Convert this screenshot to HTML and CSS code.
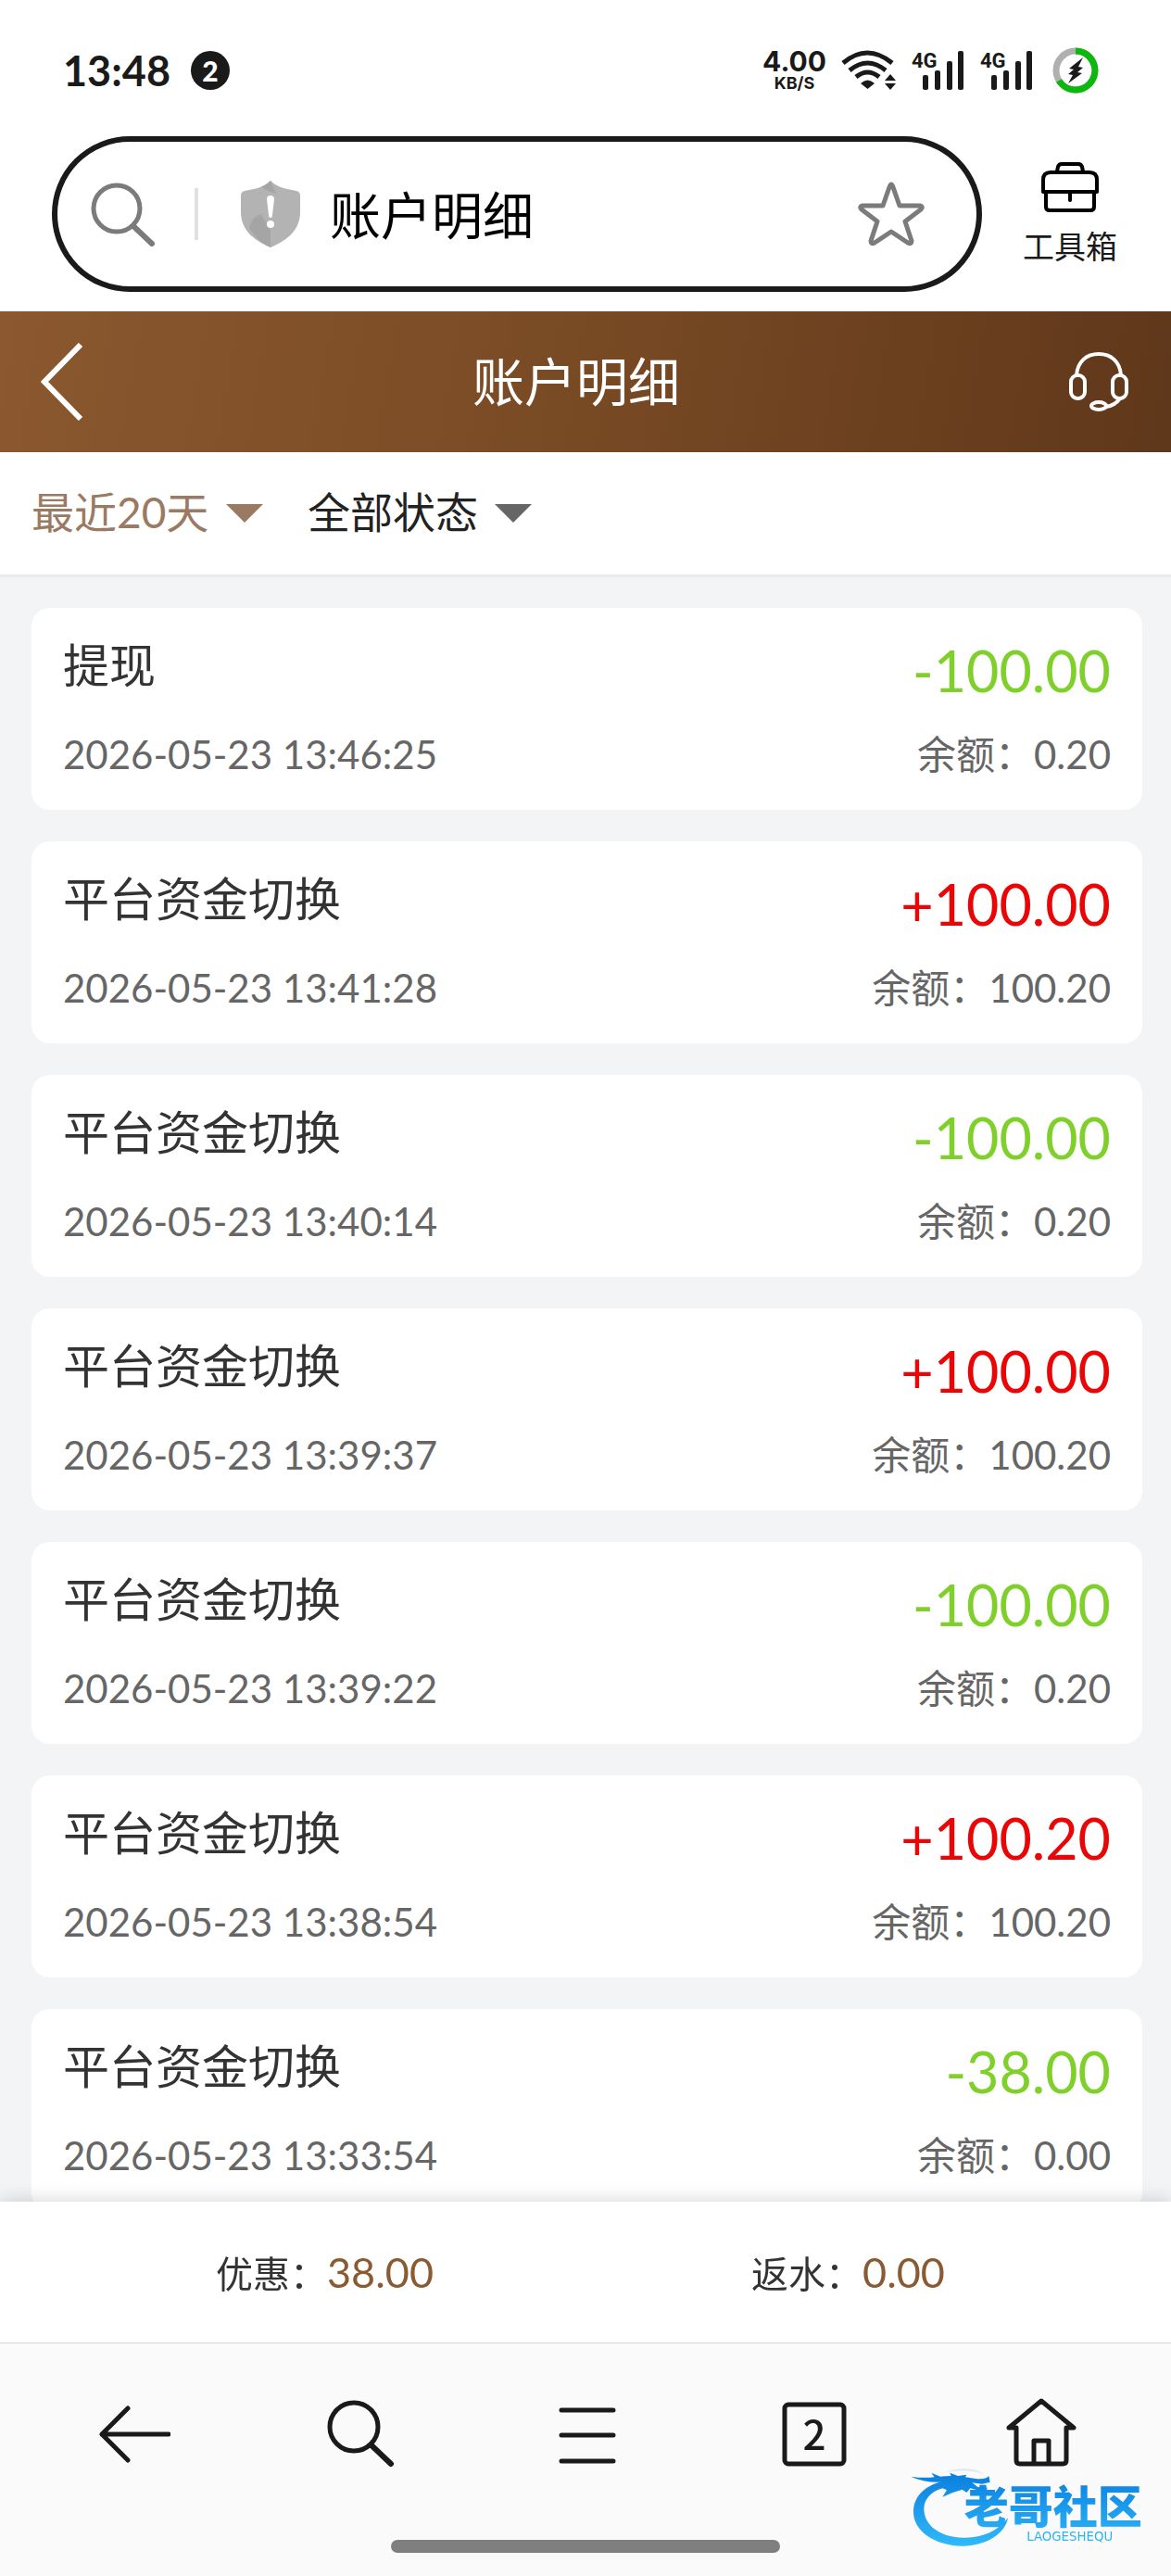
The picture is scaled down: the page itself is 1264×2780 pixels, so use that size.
FILE: index.html
```html
<!DOCTYPE html>
<html lang="zh-CN">
<head>
  <meta charset="UTF-8">
  <meta name="viewport" content="width=device-width, initial-scale=1">
  <title>账户明细</title>
  <link rel="stylesheet" href="styles.css">
</head>
<body>
  <div class="page">

    <!-- Status bar -->
    <div class="status-bar">
      <span class="clock">13:48</span>
      <span class="notice-count">2</span>
      <div class="status-right">
        <div class="net-speed">
          <span class="speed-value">4.00</span>
          <span class="speed-unit">KB/S</span>
        </div>
        <svg class="wifi" width="60" height="44" viewBox="0 0 60 44" fill="none" stroke="#1a1a1a" stroke-width="5">
          <path d="M2 14Q28 -8 55 14"/>
          <path d="M9 22Q28.500 6 48 22"/>
          <path d="M16 29Q28.500 19 41 29"/>
          <path d="M21 36Q28.500 29 36 36L28.500 42z" fill="#1a1a1a" stroke="none"/>
          <path d="M47 33L53 26L59 33zM47 36H59L53 43z" fill="#1a1a1a" stroke="none"/>
        </svg>
        <svg class="signal" width="58" height="44" viewBox="0 0 58 44">
          <text x="0" y="19" class="signal-text">4G</text>
          <rect x="12" y="27" width="6" height="16" rx="2"/>
          <rect x="25" y="22" width="6" height="21" rx="2"/>
          <rect x="38" y="12" width="6" height="31" rx="2"/>
          <rect x="50" y="1" width="6" height="42" rx="2"/>
        </svg>
        <svg class="signal" width="58" height="44" viewBox="0 0 58 44">
          <text x="0" y="19" class="signal-text">4G</text>
          <rect x="12" y="27" width="6" height="16" rx="2"/>
          <rect x="25" y="22" width="6" height="21" rx="2"/>
          <rect x="38" y="12" width="6" height="31" rx="2"/>
          <rect x="50" y="1" width="6" height="42" rx="2"/>
        </svg>
        <svg class="battery" width="50" height="50" viewBox="0 0 50 50" fill="none" stroke-width="7">
          <circle cx="25" cy="25" r="21" stroke="#b0b0b0"/>
          <path d="M25 4A21 21 0 1 1 7 36" stroke="#0db80d"/>
          <path d="M33 11L18 23L23 24L17 29L22 30L17 39L32 28L27 27L33 22L28 21z" fill="#1a1a1a"/>
        </svg>
      </div>
    </div>

    <!-- Browser address bar -->
    <div class="browser-bar">
      <div class="address">
        <svg width="70" height="70" viewBox="0 0 70 70" fill="none" stroke="#7b7b7b" stroke-width="5">
          <circle cx="28" cy="29" r="25"/>
          <path d="M46 48L66 67" stroke-width="6" stroke-linecap="round"/>
        </svg>
        <span class="divider"></span>
        <svg class="shield" width="64" height="72" viewBox="0 0 64 72">
          <path d="M32 0C40 8 50 9 60 11Q64 12 64 16V34C64 55 47 66 32 72C17 66 0 55 0 34V16Q0 12 4 11C14 9 24 8 32 0z" fill="#b3b3b3"/>
          <path d="M9 51Q12 38 22 36L32 54L32 72Q18 66 9 51zM32 0L38 14Q30 12 22 7Q28 4 32 0z" fill="#a5a5a5"/>
          <path d="M28 20Q28 16 32 16Q36 16 36 20L34 37Q34 40 32 40Q30 40 30 37z" fill="#fff"/>
          <circle cx="32" cy="47" r="4" fill="#fff"/>
        </svg>
        <input class="address-input" type="text" value="账户明细" aria-label="地址栏">
        <button class="icon-btn" type="button" aria-label="收藏">
          <svg width="72" height="72" viewBox="0 0 72 72" fill="none" stroke="#7b7b7b" stroke-width="5" stroke-linejoin="round">
            <path d="M36 4Q37 4 38 7L45 27H67Q71 28 68 31L51 44L58 65Q58 69 54 67L36 55L18 67Q14 69 14 65L21 44L4 31Q1 28 5 27H27L34 7Q35 4 36 4z"/>
          </svg>
        </button>
      </div>
      <button class="toolbox" type="button">
        <svg width="64" height="56" viewBox="0 0 64 56" fill="none" stroke="#000" stroke-width="4" stroke-linejoin="round" stroke-linecap="round">
          <path d="M18 11L19 6Q20 3 23 3H41Q44 3 45 6L46 11"/>
          <path d="M3 33V20Q3 12 11 12H53Q61 12 61 20V33z"/>
          <path d="M6 34V49Q6 53 10 53H54Q58 53 58 49V34M32 34V42"/>
        </svg>
        <span>工具箱</span>
      </button>
    </div>

    <!-- Page header -->
    <header class="header">
      <button class="icon-btn" type="button" aria-label="返回">
        <svg width="46" height="84" viewBox="0 0 46 84" fill="none" stroke="#fff" stroke-width="6">
          <path d="M43 2L4 42L43 82"/>
        </svg>
      </button>
      <h1>账户明细</h1>
      <button class="icon-btn" type="button" aria-label="客服">
        <svg width="64" height="66" viewBox="0 0 64 66" fill="none" stroke="#fff" stroke-width="4">
          <path d="M8 26C9 11 19 3 32 3S55 11 56 26"/>
          <rect x="2" y="26" width="15" height="25" rx="7"/>
          <rect x="47" y="26" width="15" height="25" rx="7"/>
          <ellipse cx="32" cy="59" rx="8" ry="4"/>
          <path d="M40 60Q49 59 55 51"/>
        </svg>
      </button>
    </header>

    <!-- Filters -->
    <div class="filters">
      <div class="filter active">
        <select aria-label="时间">
          <option>最近20天</option>
          <option>最近7天</option>
        </select>
        <span class="arrow"></span>
      </div>
      <div class="filter">
        <select aria-label="状态">
          <option>全部状态</option>
          <option>提现</option>
        </select>
        <span class="arrow"></span>
      </div>
    </div>

    <!-- Records -->
    <ul class="records">
      <li class="card">
        <div class="info">
          <span class="title">提现</span>
          <time class="date">2026-05-23 13:46:25</time>
        </div>
        <div class="money">
          <span class="amount out">-100.00</span>
          <span class="balance">余额：0.20</span>
        </div>
      </li>
      <li class="card">
        <div class="info">
          <span class="title">平台资金切换</span>
          <time class="date">2026-05-23 13:41:28</time>
        </div>
        <div class="money">
          <span class="amount in">+100.00</span>
          <span class="balance">余额：100.20</span>
        </div>
      </li>
      <li class="card">
        <div class="info">
          <span class="title">平台资金切换</span>
          <time class="date">2026-05-23 13:40:14</time>
        </div>
        <div class="money">
          <span class="amount out">-100.00</span>
          <span class="balance">余额：0.20</span>
        </div>
      </li>
      <li class="card">
        <div class="info">
          <span class="title">平台资金切换</span>
          <time class="date">2026-05-23 13:39:37</time>
        </div>
        <div class="money">
          <span class="amount in">+100.00</span>
          <span class="balance">余额：100.20</span>
        </div>
      </li>
      <li class="card">
        <div class="info">
          <span class="title">平台资金切换</span>
          <time class="date">2026-05-23 13:39:22</time>
        </div>
        <div class="money">
          <span class="amount out">-100.00</span>
          <span class="balance">余额：0.20</span>
        </div>
      </li>
      <li class="card">
        <div class="info">
          <span class="title">平台资金切换</span>
          <time class="date">2026-05-23 13:38:54</time>
        </div>
        <div class="money">
          <span class="amount in">+100.20</span>
          <span class="balance">余额：100.20</span>
        </div>
      </li>
      <li class="card">
        <div class="info">
          <span class="title">平台资金切换</span>
          <time class="date">2026-05-23 13:33:54</time>
        </div>
        <div class="money">
          <span class="amount out">-38.00</span>
          <span class="balance">余额：0.00</span>
        </div>
      </li>
    </ul>

    <!-- Totals -->
    <div class="summary">
      <div class="summary-item">优惠：<span class="summary-value">38.00</span></div>
      <div class="summary-item">返水：<span class="summary-value">0.00</span></div>
    </div>

    <!-- Browser toolbar -->
    <nav class="toolbar">
      <div class="toolbar-buttons">
        <button class="icon-btn" type="button" aria-label="后退">
          <svg width="80" height="80" viewBox="0 0 80 80">
            <path d="M34 13L6 41L34 69M6 41H78"/>
          </svg>
        </button>
        <button class="icon-btn" type="button" aria-label="搜索">
          <svg width="80" height="80" viewBox="0 0 80 80">
            <circle cx="33" cy="33" r="26"/>
            <path d="M52 53L73 73" stroke-width="6"/>
          </svg>
        </button>
        <button class="icon-btn" type="button" aria-label="菜单">
          <svg width="80" height="80" viewBox="0 0 80 80">
            <path d="M12 15H68M12 42H68M12 70H68"/>
          </svg>
        </button>
        <button class="icon-btn" type="button" aria-label="标签页">
          <svg width="80" height="80" viewBox="0 0 80 80">
            <rect x="8" y="9" width="64" height="64" rx="4"/>
            <text x="40" y="58" class="tab-count">2</text>
          </svg>
        </button>
        <button class="icon-btn" type="button" aria-label="主页">
          <svg width="80" height="80" viewBox="0 0 80 80">
            <path d="M13 34H5L40 5L75 34H67V69Q67 73 63 73H17Q13 73 13 69zM32 73V48H48V73"/>
          </svg>
        </button>
      </div>
      <div class="home-handle"></div>

      <svg class="watermark" width="304" height="140" viewBox="0 0 912 420">
        <defs>
          <linearGradient id="blue" gradientUnits="userSpaceOnUse" x1="0" y1="90" x2="0" y2="320">
            <stop offset="0" stop-color="#0a7fe0"/>
            <stop offset="1" stop-color="#2fb9f8"/>
          </linearGradient>
        </defs>
        <g fill="url(#blue)">
          <path d="M210 108C120 115 78 160 78 212C78 275 150 323 238 323C310 323 375 285 384 232C350 275 305 296 245 296C175 296 114 265 112 205C111 165 145 132 220 128z"/>
          <path d="M70 98Q110 104 146 100L136 86L165 98L200 96L196 86L222 96L250 92L246 100L275 104Q310 110 322 96L326 116L300 122L268 118L286 132L318 134L310 148L285 142L262 136L250 150L236 140L205 150L172 164L186 142L160 130L170 116Q110 118 70 98z"/>
          <path d="M180 84Q260 58 310 92Q262 70 180 84z" opacity=".15"/>
          <text x="530" y="250" class="mark-name">老哥社区</text>
          <text x="584" y="305" class="mark-sub">LAOGESHEQU</text>
        </g>
      </svg>
    </nav>

  </div>
</body>
</html>
```
FILE: styles.css
```css
* {
  box-sizing: border-box;
}

body {
  margin: 0;
  font-family: Lato, "Noto Sans CJK SC", sans-serif;
  color: #333;
  background-color: #fff;
}

svg {
  display: block;
  flex-shrink: 0;
}

button {
  padding: 0;
  border: none;
  background: none;
  font-family: inherit;
  cursor: pointer;
}

.page {
  display: flex;
  flex-direction: column;
  height: 100vh;
}

/* Status bar */
.status-bar {
  display: flex;
  align-items: center;
  height: 147px;
  padding: 4px 78px 0 68px;
  color: #1a1a1a;
}

.clock {
  font-size: 45px;
  font-weight: bold;
}

.notice-count {
  width: 42px;
  height: 42px;
  margin-left: 22px;
  border-radius: 50%;
  background-color: #1a1a1a;
  color: #fff;
  font-size: 30px;
  font-weight: 900;
  line-height: 42px;
  text-align: center;
}

.status-right {
  display: flex;
  align-items: center;
  gap: 16px;
  margin-left: auto;
}

.net-speed {
  display: flex;
  flex-direction: column;
  align-items: center;
  font-family: Inter, sans-serif;
  font-weight: bold;
}

.speed-value {
  font-size: 30px;
  line-height: 28px;
}

.speed-unit {
  font-size: 18px;
  line-height: 20px;
}

.signal {
  fill: #1a1a1a;
}

.signal-text {
  font-family: Roboto, sans-serif;
  font-size: 22px;
  font-weight: bold;
}

.battery {
  margin-left: 4px;
}

/* Browser address bar */
.browser-bar {
  display: flex;
  align-items: center;
  gap: 44px;
  padding: 0 58px 21px 56px;
}

.address {
  display: flex;
  flex: 1;
  align-items: center;
  min-width: 0;
  height: 168px;
  padding: 0 56px 0 36px;
  border: 6px solid #1a1a1a;
  border-radius: 84px;
}

.divider {
  flex-shrink: 0;
  width: 4px;
  height: 56px;
  margin: 0 46px 0 42px;
  background-color: #e0e0e0;
}

.address-input {
  flex: 1;
  min-width: 0;
  margin-left: 32px;
  padding: 0 0 4px;
  border: none;
  outline: none;
  background: none;
  color: #000;
  font-family: inherit;
  font-size: 55px;
}

.toolbox {
  display: flex;
  flex-direction: column;
  flex-shrink: 0;
  align-items: center;
  gap: 10px;
  color: #1a1a1a;
  font-size: 34px;
  white-space: nowrap;
}

/* Page header */
.header {
  display: flex;
  align-items: center;
  justify-content: space-between;
  height: 152px;
  padding: 0 46px 0 44px;
  background-image: linear-gradient(100deg, #8b582f, #784a24 50%, #5f371a);
  color: #fff;
}

.header h1 {
  margin: 0;
  padding-bottom: 8px;
  font-size: 56px;
  font-weight: normal;
}

/* Filters */
.filters {
  display: flex;
  align-items: center;
  gap: 48px;
  height: 135px;
  padding: 0 34px;
  border-bottom: 3px solid #eaeaea;
}

.filter {
  display: flex;
  align-items: center;
  gap: 18px;
  color: #666;
}

.filter select {
  appearance: none;
  padding: 0 0 4px;
  border: none;
  background: none;
  color: #222;
  font-family: inherit;
  font-size: 46px;
}

.filter.active,
.filter.active select {
  color: #9b7a63;
}

.arrow {
  border: 20px solid transparent;
  border-top-color: currentColor;
  border-bottom: none;
}

/* Records */
.records {
  display: flex;
  flex: 1;
  flex-direction: column;
  gap: 34px;
  min-height: 0;
  margin: 0;
  padding: 33px 31px 0 34px;
  overflow-y: auto;
  scrollbar-width: none;
  background-color: #f3f4f6;
  list-style: none;
}

.card {
  display: flex;
  flex-shrink: 0;
  justify-content: space-between;
  padding: 32px 34px 30px;
  border-radius: 20px;
  background-color: #fff;
}

.info,
.money {
  display: flex;
  flex-direction: column;
  justify-content: space-between;
  height: 156px;
}

.money {
  align-items: flex-end;
}

.title {
  font-size: 50px;
  line-height: 60px;
}

.date,
.balance {
  color: #666;
  font-size: 42px;
  line-height: 60px;
}

.amount {
  font-size: 61px;
  line-height: 72px;
}

.amount.out {
  color: #80d02c;
}

.amount.in {
  color: #ea0606;
}

/* Totals */
.summary {
  position: relative;
  display: flex;
  align-items: center;
  height: 152px;
  padding: 0 66px 0 68px;
  background-color: #fff;
  box-shadow: 0 0 20px rgba(0, 0, 0, 0.18);
}

.summary-item {
  flex: 1;
  font-size: 40px;
  text-align: center;
}

.summary-value {
  color: #8a5a33;
  font-size: 45px;
}

/* Browser toolbar */
.toolbar {
  position: relative;
  height: 252px;
  padding-top: 57px;
  border-top: 1px solid #d5d8d8;
  background-color: #fafafa;
}

.toolbar-buttons {
  display: flex;
  justify-content: space-between;
  padding: 0 100px 0 104px;
}

.toolbar-buttons svg {
  fill: none;
  stroke: #1a1a1a;
  stroke-width: 5px;
  stroke-linecap: round;
  stroke-linejoin: round;
}

.toolbar-buttons .tab-count {
  fill: #1a1a1a;
  stroke: none;
  font-family: "Noto Sans CJK SC", sans-serif;
  font-size: 44px;
  font-weight: 500;
  text-anchor: middle;
}

.home-handle {
  width: 420px;
  height: 14px;
  margin: 75px auto 0;
  border-radius: 7px;
  background-color: #7f7f7f;
}

.watermark {
  position: absolute;
  right: 0;
  bottom: 0;
}

.mark-name {
  font-family: "Noto Sans CJK SC", sans-serif;
  font-size: 144px;
  font-weight: 900;
  text-anchor: middle;
}

.mark-sub {
  font-family: "DejaVu Sans", sans-serif;
  font-size: 40px;
  text-anchor: middle;
}
```
